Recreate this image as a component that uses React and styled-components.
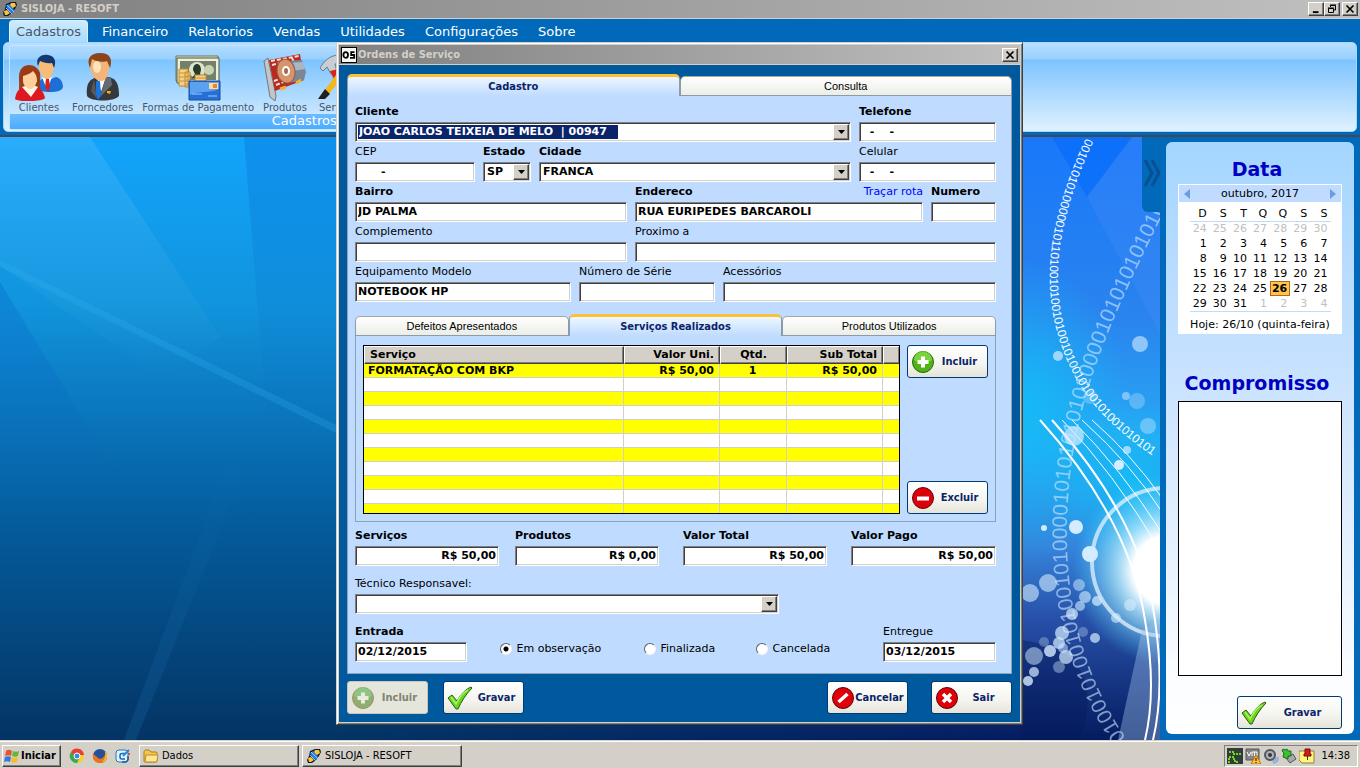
import React from "react";
import styled, { createGlobalStyle, css } from "styled-components";

const GlobalStyle = createGlobalStyle`
  * { box-sizing: border-box; }
  body {
    margin: 0;
    font-family: "DejaVu Sans", Verdana, sans-serif;
    font-size: 11px;
    color: #000;
  }
  button, input, select, textarea { font: inherit; color: inherit; margin: 0; }
`;

const compact = css`
  font-family: "DejaVu Sans Condensed", Tahoma, sans-serif;
`;

const raised = css`
  background: #d4d0c8;
  border: 1px solid;
  border-color: #fff #404040 #404040 #fff;
  box-shadow: inset -1px -1px #808080;
`;

const sunken = css`
  background-color: #fff;
  border: 1px solid;
  border-color: #808080 #fff #fff #808080;
  border-radius: 0;
  box-shadow: inset 1px 1px #404040, inset -1px -1px #d4d0c8;
`;

/* ---------- application frame ---------- */

const Page = styled.div`
  min-height: 100vh;
  display: flex;
  flex-direction: column;
  position: relative;
  background: #0069b9;
`;

const TitleBar = styled.header`
  display: flex;
  align-items: center;
  gap: 3px;
  height: 19px;
  padding: 0 2px;
  flex: none;
  background: linear-gradient(90deg, #808080, #c0c0c0);
  border-bottom: 1px solid #d4d0c8;
  color: #d4d0c8;
  font-weight: bold;
  ${compact}
`;

const TitleText = styled.h1`
  margin: 0;
  flex: 1;
  font-size: 11px;
  line-height: 16px;
`;

const CaptionButtons = styled.div`
  display: flex;
`;

const CaptionButton = styled.button`
  ${raised}
  width: 16px;
  height: 14px;
  padding: 0;
  display: flex;
  align-items: center;
  justify-content: center;
  margin-left: ${(p) => (p.$apart ? "2px" : "0")};
`;

const Ribbon = styled.div`
  flex: none;
  padding: 1px 3px 3px;
  background: #0069b9;
  border-bottom: 2px solid #444850;
`;

const Menu = styled.nav`
  display: flex;
  height: 22px;
  padding-left: 6px;
`;

const MenuTab = styled.button`
  height: 22px;
  border: 1px solid transparent;
  border-bottom: 0;
  border-radius: 4px 4px 0 0;
  padding: 0 ${(p) => (p.$active ? "6px" : "9px")};
  margin-right: ${(p) => (p.$active ? "4px" : "0")};
  background: ${(p) => (p.$active ? "linear-gradient(#cdeaff, #a9dbff)" : "none")};
  border-color: ${(p) => (p.$active ? "#d9f0ff" : "transparent")};
  color: ${(p) => (p.$active ? "#4b5563" : "#fff")};
  font-size: 13px;
  line-height: 20px;
`;

const RibbonPanel = styled.div`
  display: flex;
  height: 90px;
  padding: 2px 5px 1px;
  border: 1px solid #a4d8ff;
  border-radius: 5px;
  background: linear-gradient(#b8deff, #98d0ff 16px, #7cc4ff 17px, #a4d6ff 45px, #e0f1ff);
`;

const Group = styled.section`
  flex: none;
  width: 44%;
  display: flex;
  flex-direction: column;
  border: 1px solid #c4e6ff;
  border-radius: 3px;
`;

const Tools = styled.div`
  flex: 1;
  display: flex;
  gap: 9px;
  padding-left: 5px;
`;

const Tool = styled.button`
  display: flex;
  flex-direction: column;
  align-items: center;
  justify-content: flex-end;
  padding: 0;
  border: 0;
  background: none;
  color: #46566b;
  font-size: 10px;
  line-height: 13px;
  white-space: nowrap;
`;

const GroupName = styled.h2`
  margin: 0;
  height: 15px;
  background: linear-gradient(#6cbcff, #4cacff);
  color: #fff;
  font-size: 13px;
  font-weight: normal;
  line-height: 13px;
  text-align: center;
`;

const Desktop = styled.main`
  flex: 1;
  display: flex;
  justify-content: flex-end;
  position: relative;
`;

const Wallpaper = styled.svg`
  position: absolute;
  inset: 0;
  width: 100%;
  height: 100%;
`;

/* ---------- side bar ---------- */

const Drawer = styled.button`
  position: relative;
  width: 18px;
  height: 75px;
  padding: 0;
  border: 0;
  border-radius: 0 0 0 6px;
  background: #0069b9;
`;

const Sidebar = styled.aside`
  position: relative;
  display: flex;
  width: 200px;
  padding: 5px 6px 6px;
  background: #0069b9;
`;

const SideCard = styled.div`
  flex: 1;
  display: flex;
  flex-direction: column;
  padding: 15px 12px 5px;
  border-radius: 6px;
  background: linear-gradient(#a4d6ff, #c4e0ff 35%, #fafcff 90%, #fff);
`;

const SideTitle = styled.h2`
  margin: 0 -6px;
  padding-right: 6px;
  color: #0000c0;
  font-size: 19px;
  line-height: 24px;
  text-align: center;
`;

const Calendar = styled.section`
  margin: 3px 0 37px;
  height: 150px;
  padding: 1px;
  background: #fff;
  white-space: nowrap;
`;

const MonthBar = styled.div`
  display: flex;
  justify-content: space-between;
  align-items: center;
  height: 17px;
  padding: 0 5px;
  background: #bfdbff;
`;

const Arrow = styled.button`
  padding: 0;
  width: 6px;
  border: 0;
  background: none;
  display: flex;
`;

const Days = styled.table`
  width: 141px;
  margin: 4px auto 0;
  border-collapse: collapse;
  border-bottom: 1px solid #bfdbff;
  table-layout: fixed;
  thead { border-bottom: 1px solid #bfdbff; }
  th, td { padding: 0 3px 0 0; height: 15px; line-height: 13px; text-align: right; }
  th { font-weight: normal; }
`;

const Day = styled.td`
  color: ${(p) => (p.$out ? "#c0c0c0" : "#000")};
  ${(p) =>
    p.$today &&
    css`
      background: #ffc54c;
      outline: 1px solid #b5651d;
      outline-offset: -1px;
      font-weight: bold;
    `}
`;

const Today = styled.p`
  margin: 5px 0 0;
  line-height: 16px;
  text-align: center;
`;

const Notes = styled.textarea`
  flex: 1;
  width: 100%;
  margin: 6px 0 20px;
  border: 1px solid #000;
  border-radius: 0;
  resize: none;
  background: #fff;
`;

/* ---------- buttons ---------- */

const ActionButton = styled.button`
  display: flex;
  align-items: center;
  width: ${(p) => p.$width || 81}px;
  height: 33px;
  padding: 0 3px;
  border: 1px solid #003c74;
  border-radius: 3px;
  background: linear-gradient(#fff, #f4f4ee 60%, #e4e4da);
  color: #0a246a;
  font-weight: bold;
  align-self: ${(p) => (p.$end ? "flex-end" : "auto")};
  ${compact}
  span { flex: 1; text-align: center; white-space: nowrap; }
  svg { flex: none; }
  &:disabled {
    background: #e4e6dc;
    border-color: #c9c7ba;
    color: #80846c;
  }
`;

/* ---------- dialog ---------- */

const Dialog = styled.section`
  position: absolute;
  top: -95px;
  left: calc(50% - 344px);
  width: 687px;
  border: 1px solid;
  border-color: #d4d0c8 #404040 #404040 #d4d0c8;
  box-shadow: inset 1px 1px #fff, inset -1px -1px #808080;
  padding: 2px;
  background: #d4d0c8;
`;

const DialogTitle = styled(TitleBar)`
  height: 20px;
  gap: 1px;
`;

const DialogBody = styled.form`
  padding: 9px 8px 8px;
  background: #00599c;
`;

const TabRow = styled.div`
  display: grid;
  grid-template-columns: repeat(${(p) => p.$count}, 1fr);
  align-items: end;
`;

const Tab = styled.button`
  height: ${(p) => (p.$active ? 22 : 20)}px;
  padding: 0;
  border: 1px solid #8c9bab;
  border-top-color: #a9a9a0;
  border-radius: 5px 5px 0 0;
  background: linear-gradient(#fff, #ecede6);
  font-family: "Liberation Sans", Arial, sans-serif;
  line-height: 18px;
  ${(p) =>
    p.$active &&
    css`
      border-bottom: 0;
      border-top: 3px solid #fcc038;
      background: linear-gradient(#eef7ff, #bfdbff);
      color: #0a246a;
      font-weight: bold;
      ${compact}
    `}
`;

const TabPanel = styled.div`
  border: 1px solid #8ba3b9;
  border-top: 0;
  background: #bfdbff;
  padding: ${(p) => (p.$inner ? "9px 7px 7px" : "6px 15px 11px 7px")};
`;

const ServicesTabs = styled.div`
  margin: 12px 0 4px;
`;

const ServicesArea = styled.div`
  display: flex;
  gap: 7px;
`;

const ButtonColumn = styled.div`
  display: flex;
  flex-direction: column;
  justify-content: space-between;
`;

const FieldRow = styled.div`
  display: grid;
  grid-template-columns: ${(p) => p.$cols};
  column-gap: 8px;
`;

const Totals = styled.div`
  display: grid;
  grid-template-columns: 144px 16px 144px 24px 144px 24px 1fr;
  > :nth-child(2) { grid-column: 3; }
  > :nth-child(3) { grid-column: 5; }
  > :nth-child(4) { grid-column: 7; }
`;

const FieldBox = styled.div`
  display: flex;
  flex-direction: column;
  width: ${(p) => (p.$width ? p.$width + "px" : "auto")};
  margin-top: ${(p) => (p.$spaced ? "8px" : "0")};
`;

const LabelLine = styled.div`
  display: flex;
  justify-content: space-between;
  line-height: 20px;
  height: 20px;
  white-space: nowrap;
`;

const Label = styled.label`
  font-weight: ${(p) => (p.$bold ? "bold" : "normal")};
`;

const RouteLink = styled.a`
  color: #0000ff;
  text-decoration: none;
`;

const TextInput = styled.input`
  ${sunken}
  width: 100%;
  height: 20px;
  padding: 0 2px 1px;
  font-weight: bold;
  text-align: ${(p) => (p.$right ? "right" : "left")};
`;

const SelectBox = styled.div`
  position: relative;
  height: 20px;
`;

const Select = styled.select`
  ${sunken}
  appearance: none;
  width: 100%;
  height: 20px;
  padding: 0 18px 1px 3px;
  font-weight: bold;
  outline: 0;
  ${(p) =>
    p.$selected &&
    css`
      color: #fff;
      background-image: linear-gradient(#0a246a, #0a246a);
      background-repeat: no-repeat;
      background-position: 2px 2px;
      background-size: 260px 14px;
    `}
`;

const DropArrow = styled.span`
  ${raised}
  position: absolute;
  top: 2px;
  right: 2px;
  width: 16px;
  height: 16px;
  display: flex;
  align-items: center;
  justify-content: center;
  pointer-events: none;
`;

const GridFrame = styled.div`
  flex: 1;
  height: 169px;
  overflow: hidden;
  border: 1px solid #000;
  background: #fff;
`;

const Grid = styled.table`
  width: 100%;
  border-collapse: separate;
  border-spacing: 0;
  table-layout: fixed;
  font-weight: bold;
  th {
    ${raised}
    height: 18px;
    padding: 0 5px;
    line-height: 16px;
  }
  td {
    height: 14px;
    padding: 0 5px 0 4px;
    line-height: 13px;
    border-right: 1px solid #d4d0c8;
    border-bottom: 1px solid #d4d0c8;
  }
  tbody tr:nth-child(odd) { background: #ff0; }
  th:last-child, td:last-child { border-right: 0; }
`;

const Cell = styled.td`
  text-align: ${(p) => p.$align || "left"};
`;

const HeadCell = styled.th`
  text-align: ${(p) => p.$align || "left"};
`;

const StatusRow = styled.div`
  display: flex;
  justify-content: space-between;
  margin-top: 8px;
`;

const RadioGroup = styled.div`
  display: grid;
  grid-template-columns: 144px 112px 95px;
  align-items: center;
  padding-top: 13px;
`;

const RadioLabel = styled.label`
  display: flex;
  align-items: center;
  gap: 5px;
  white-space: nowrap;
`;

const Radio = styled.input`
  appearance: none;
  width: 12px;
  height: 12px;
  border: 1px solid;
  border-color: #606060 #f4f4f4 #f4f4f4 #606060;
  border-radius: 50%;
  background: #fff;
  &:checked { background: radial-gradient(circle, #000 2px, #fff 3px); }
`;

const Footer = styled.div`
  display: flex;
  justify-content: space-between;
  margin-top: 7px;
`;

const FooterSide = styled.div`
  display: flex;
  gap: ${(p) => p.$gap}px;
`;

/* ---------- task bar ---------- */

const Taskbar = styled.footer`
  flex: none;
  display: flex;
  align-items: center;
  height: 28px;
  padding: 2px 2px 0;
  background: #d4d0c8;
  border-top: 1px solid #d4d0c8;
  box-shadow: inset 0 1px #fff;
  ${compact}
`;

const TaskButton = styled.button`
  ${raised}
  display: flex;
  align-items: center;
  gap: ${(p) => (p.$bold ? 1 : 3)}px;
  width: ${(p) => p.$width}px;
  height: 22px;
  padding: 0 ${(p) => (p.$bold ? 1 : 3)}px;
  margin-right: 3px;
  font-weight: ${(p) => (p.$bold ? "bold" : "normal")};
  white-space: nowrap;
  svg { flex: none; }
`;

const QuickLaunch = styled.div`
  display: flex;
  gap: 7px;
  padding: 0 8px 0 5px;
`;

const Tray = styled.div`
  display: flex;
  align-items: center;
  gap: 2px;
  height: 22px;
  margin-left: auto;
  padding: 0 7px 0 2px;
  border: 1px solid;
  border-color: #808080 #fff #fff #808080;
`;

const Clock = styled.time`
  margin-left: 4px;
`;

/* ---------- icons ---------- */

const Svg = ({ s = 16, h, box = "0 0 16 16", children }) => (
  <svg width={s} height={h || s} viewBox={box} aria-hidden="true">
    {children}
  </svg>
);

const LogoIcon = () => (
  <Svg>
    <path d="M4 3 9 1h5l1 3-2 4-3 4-4 3H2L1 12l2-4z" fill="#0a1c3c" />
    <path d="M4 5l3-2 4 3 1 4-2 2-4-3z" fill="#2f7fe0" />
    <path d="M9 2h4l1 3-3 2-3-3zM2 10l3-1 3 3-3 2H3z" fill="#ffc52e" />
    <path d="m5 4 7 7M4 7l6 6" stroke="#8cc4ff" strokeWidth="1" />
  </Svg>
);

const OsIcon = () => (
  <Svg>
    <rect x=".5" y=".5" width="15" height="15" fill="#f4f7f2" stroke="#000" />
    <ellipse cx="4.700" cy="8" rx="2.300" ry="2.800" fill="none" stroke="#000" strokeWidth="1.800" />
    <path d="M13.500 5.200H10.200V8h3v2.800H9" fill="none" stroke="#000" strokeWidth="1.800" />
  </Svg>
);

const MinimizeIcon = () => (
  <Svg s={10}>
    <path d="M3 13h9" stroke="#000" strokeWidth="3" />
  </Svg>
);

const RestoreIcon = () => (
  <Svg s={10} box="0 0 10 10">
    <path d="M3.500 3V1.500h5V6H7M3 1h6M1.500 4.500h5v4h-5zM1 4h6" fill="none" stroke="#000" />
  </Svg>
);

const CloseIcon = () => (
  <Svg s={10} box="0 0 10 10">
    <path d="m1.500 1.500 7 7M8.500 1.500l-7 7" stroke="#000" strokeWidth="1.700" />
  </Svg>
);

const ClientsIcon = () => (
  <Svg s={48} box="0 0 48 48">
    <path d="M23 36c0-8 3-11 9-12l4 2 5-2c5 1 7 6 7 10-1 4-6 5-13 5-6 0-11-1-12-3z" fill="#1c6fd6" />
    <path d="m27 24 5 13 5-13-5 2z" fill="#fff" />
    <path d="m31 26 3 0 1 8-2 5-3-5z" fill="#d8201c" />
    <path d="M24 9c0-4 4-6 8-5 5 0 8 4 7 12l-3 8c-3 3-6 2-8 0l-4-8z" fill="#f6bd78" />
    <path d="M23 13c-3-8 3-12 10-11 6 1 9 5 6 13l-2-5c-5 1-9-1-12-2z" fill="#15376f" />
    <path d="M4 36c1-7-2-16 3-21 6-6 16-2 18 5 1 6-1 12 1 18-6 3-17 3-22-2z" fill="#9a3c17" />
    <path d="M0 46c1-7 4-11 9-12h11c6 1 9 6 10 11-2 4-28 4-30 1z" fill="#dd1820" />
    <path d="m7 34 9 10 7-10-7-3z" fill="#fff2e2" />
    <path d="M8 23c3-1 7-2 10-5 3 3 4 6 4 10-2 6-4 8-7 8s-7-4-7-8z" fill="#ffd19a" />
  </Svg>
);

const SupplierIcon = () => (
  <Svg s={34} h={48} box="0 0 34 48">
    <path d="M1 43c-1-11 1-16 10-19h12c8 2 10 8 10 19-5 6-28 6-32 0z" fill="#35383d" />
    <path d="m11 24 4 15 5-15-5 3z" fill="#fff" />
    <path d="m10 28 4 0 1 15-3 4-2-5z" fill="#1675e0" />
    <path d="m20 24-6 20 12-12-1-7z" fill="#666b73" />
    <path d="m8 26 3 20-6-8z" fill="#555a62" />
    <path d="M4 11C5 3 11 2 14 2c7 0 9 5 9 13-1 9-4 13-8 13-6 0-11-7-11-17z" fill="#f3b577" />
    <path d="M3 12C1 5 5 0 14 0c10 0 13 6 10 15l-3-7c-6 2-12 0-15-2l-2 9z" fill="#8c451b" />
    <path d="M21 38h4l-1 3-3-1z" fill="#ffae00" />
    <ellipse cx="11" cy="14" rx="4" ry="6" fill="#ffe3bd" />
  </Svg>
);

const MoneyIcon = () => (
  <Svg s={48} box="0 0 48 48">
    <path d="M2 3h42v25H2z" fill="#dde3c8" stroke="#6d7855" />
    <path d="M3 5h42v25H3z" fill="#edf0dc" stroke="#4c573a" />
    <path d="M6 8h36v19H6z" fill="#73806a" />
    <circle cx="23" cy="17" r="8" fill="#dfe3cb" />
    <path d="M19 17c0-8 8-8 8 0l-1 4 3 4H18l3-4z" fill="#273b2c" />
    <circle cx="35" cy="17" r="5" fill="#c9d1b3" />
    <path d="M5 16h9v17H5zM11 19h5v15h-5zM21 22h11v7H21z" fill="#f5d183" stroke="#c28a34" />
    <path d="M5 20h9M5 24h9M5 28h9M11 23h5M11 27h5M11 31h5M21 25h11" stroke="#c8923c" />
    <path d="M15 28h31v19H15z" fill="#266fd4" stroke="#184da5" />
    <path d="M16 29h29v7c-11 5-19 1-29 6z" fill="#5aa1f0" />
    <path d="M35 30h9v6h-9z" fill="#ffd9a0" />
    <path d="M39 31h4v4h-4z" fill="#e8862c" />
    <path d="M18 41h10M34 43h9" stroke="#9ccaff" strokeWidth="1" />
  </Svg>
);

const ProductsIcon = () => (
  <Svg s={44} h={48} box="0 0 44 48">
    <path d="M1 8 5 5l8 38-1 5-5-4z" fill="#c2c6c8" stroke="#777" />
    <path d="m6 7 31-6 4 26-29 11z" fill="#b92920" />
    <path d="m8 8 28-5M9 12l8-2M11 28l13-5M13 32l23-9M29 5l6 12" stroke="#f0e3d6" strokeWidth="2" strokeDasharray="4 2" />
    <path d="m22 8 17-1 4 12-2 8-16 3z" fill="#7b8797" />
    <path d="m28 10 12-1 2 7-12 2z" fill="#aab6c6" />
    <ellipse cx="23" cy="18" rx="9" ry="12" fill="#d6946c" stroke="#8f5b44" transform="rotate(-10 24 18)" />
    <ellipse cx="23" cy="18" rx="4" ry="5" fill="#fff" />
    <ellipse cx="23" cy="18" rx="2" ry="3" fill="#a26b53" />
    <path d="m33 30 5-3M17 36l6-2" stroke="#f3af2f" strokeWidth="3" />
  </Svg>
);

const ServicesIcon = () => (
  <Svg s={48} box="0 0 48 48">
    <path d="M4 15C8 8 13 3 22 2l4 7-7 2 2 8-6 2-4-7-4 4z" fill="#c8ced4" stroke="#727b84" />
    <path d="m14 18 8-2 14 28-8 3z" fill="#d8241c" />
    <path d="m2 46 24-32 5 4L9 46z" fill="#f4b619" />
    <path d="m2 46 7-10 5 5-5 5z" fill="#202020" />
  </Svg>
);

const Ball = ({ fill, dark, children }) => (
  <Svg s={24} box="0 0 24 24">
    <circle cx="12" cy="12" r="10.500" fill={fill} stroke={dark} />
    {children}
  </Svg>
);

const PlusIcon = ({ off }) => (
  <Ball fill={off ? "#8fae74" : "#4fb416"} dark={off ? "#a8905c" : "#24650c"}>
    <path d="M3 10a9 9 0 0 1 18 0c-4 3-13 3-18 0z" fill={off ? "#8cd08c" : "#8be04a"} opacity=".7" />
    <path d="M12 6.500v11M6.500 12h11" stroke={off ? "#e8ecd8" : "#fff"} strokeWidth="4" />
  </Ball>
);

const MinusIcon = () => (
  <Ball fill="#dc0008" dark="#6d0508">
    <path d="M6 12.500h12" stroke="#fff" strokeWidth="4" />
  </Ball>
);

const SlashIcon = () => (
  <Ball fill="#e00008" dark="#5d0508">
    <path d="m7.500 16 9-8" stroke="#fff" strokeWidth="3.500" />
  </Ball>
);

const CrossIcon = () => (
  <Ball fill="#e00008" dark="#5d0508">
    <path d="m8 8 8 8M16 8l-8 8" stroke="#fff" strokeWidth="3.500" />
  </Ball>
);

const CheckIcon = () => (
  <Svg s={26} box="0 0 26 26">
    <path d="m1 13 4-3 5 6C14 9 19 4 24 2l1 1C19 9 14 17 11 24H9z" fill="#68d51c" stroke="#285c17" />
    <path d="m4 12 5 7C13 11 17 7 21 5" fill="none" stroke="#a7f460" strokeWidth="1.500" />
  </Svg>
);

const WindowsIcon = () => (
  <Svg>
    <path d="M2 3c2-2 4-1 6 0L7 8C5 7 3 7 1 8z" fill="#e8542c" />
    <path d="M9 3c2 1 4 1 6 0l-1 5c-2 1-4 1-6 0z" fill="#68b43c" />
    <path d="M1 9c2-1 4-1 6 0l-1 5c-2-1-4-1-6 0z" fill="#3278dc" />
    <path d="M8 9c2 1 4 1 6 0l-1 5c-2 1-4 1-6 0z" fill="#f4c028" />
  </Svg>
);

const ChromeIcon = () => (
  <Svg>
    <circle cx="8" cy="8" r="7" fill="#fdce28" />
    <path d="M2 4a7 7 0 0 1 13 3H8L5 9z" fill="#e84132" />
    <path d="M2 4a7 7 0 0 0 6 11l3-6H6z" fill="#38a852" />
    <circle cx="8" cy="8" r="3" fill="#4285e8" stroke="#fff" />
  </Svg>
);

const FirefoxIcon = () => (
  <Svg>
    <circle cx="8" cy="8" r="7" fill="#24509c" />
    <path d="M1 5c1 3 3 2 4 4 2 3 6 2 8-2V3c4 5 2 12-5 12C3 15 0 11 1 5z" fill="#ef7318" />
    <path d="M13 3c4 5 1 11-3 11 3-2 4-6 3-11z" fill="#ffc12c" />
  </Svg>
);

const MailIcon = () => (
  <Svg>
    <rect x="1" y="2" width="12" height="12" rx="3" fill="#dff0ff" stroke="#2678b8" />
    <path d="M10 5.500H7a2 2 0 0 0-2 2V9a2 2 0 0 0 2 2h3" fill="none" stroke="#1c68a8" strokeWidth="1.500" />
    <path d="m8 8 6-6" stroke="#2f86d0" strokeWidth="2" />
    <circle cx="14" cy="6" r="1" fill="#d83020" />
    <path d="M13 8v4l-2 2H7" fill="none" stroke="#155c9d" strokeWidth="1.500" />
  </Svg>
);

const FolderIcon = () => (
  <Svg>
    <path d="M1 4c0-1 1-2 2-2h3l2 2h5c1 0 1 1 1 1v8c0 1-1 1-1 1H2c-1 0-1-1-1-1z" fill="#f4c84c" stroke="#ac7a1c" />
    <path d="m2 14 1-7h12l-1 6-1 1z" fill="#ffe692" stroke="#b98a2c" />
  </Svg>
);

const TrayIcons = () => (
  <>
    <Svg>
      <path d="M0 0h16v16H0z" fill="#353b38" />
      <path d="M2 4h5v2h7M2 15V9h5v4h3v3" fill="none" stroke="#66dc24" strokeWidth="2" strokeDasharray="2 1" />
    </Svg>
    <Svg>
      <path d="M1 1h13v11H1z" fill="#858585" stroke="#555" />
      <path d="m2 4 2 4 2-4M7 8V4h5v4M9.500 4v4" fill="none" stroke="#fff" />
      <path d="m11 7 5 9H6z" fill="#ffc834" stroke="#c86c08" />
      <path d="M11 10v3M11 14v1" stroke="#000" />
    </Svg>
    <Svg>
      <circle cx="7" cy="7" r="5" fill="#adb1b5" stroke="#51565c" strokeWidth="2" />
      <circle cx="7" cy="7" r="2" fill="#33383d" />
      <path d="M10 15c3 0 5-2 5-6M9 13c3 0 4-2 4-4" fill="none" stroke="#7ea9e0" strokeWidth="1.500" />
    </Svg>
    <Svg>
      <path d="m5 10 7-4 3 5-6 4z" fill="#a4abb1" stroke="#555" />
      <path d="M2 1l2 1 2-1 1 2h3v5H7v3L2 9l1-4-2-2z" fill="#3cc034" stroke="#1f6c1b" />
    </Svg>
    <Svg>
      <path d="M0 3h15v12H3l-3-3z" fill="#fff47c" stroke="#8a833b" />
      <path d="M6 1h5v5h1v2H5V6h1z" fill="#d91818" stroke="#790c0c" />
      <path d="M8.500 8v4" stroke="#333" />
    </Svg>
  </>
);

/* ---------- wallpaper ---------- */

const thinBits = "001010101000001011010010100101001010010100101001010101";
const wideBits = "010010100101001010000101010101010000101010101010";
const dots = [
  [1140, 344, 8, 0.6], [1058, 356, 5, 0.7], [1090, 397, 7, 0.3], [1126, 396, 4, 0.5],
  [1137, 401, 8, 0.3], [1148, 426, 8, 0.4], [1074, 436, 10, 0.7], [1119, 465, 5, 1],
  [1127, 450, 4, 0.7], [1044, 528, 3, 1], [1076, 527, 7, 1], [1090, 554, 8, 1],
  [1048, 583, 9, 0.6], [1030, 593, 9, 0.6], [1079, 585, 6, 0.5], [1085, 597, 6, 0.6],
  [1097, 601, 5, 0.7], [1080, 606, 5, 0.6], [1072, 614, 6, 0.7], [1130, 605, 6, 0.6],
  [1116, 618, 5, 0.6], [1095, 638, 5, 0.7], [1062, 633, 7, 0.7], [1059, 643, 6, 0.7],
  [1083, 632, 5, 0.3], [1044, 642, 5, 0.3], [1050, 651, 6, 0.8], [1034, 656, 9, 0.5],
  [1066, 657, 7, 0.7], [1059, 667, 6, 0.4], [1034, 672, 5, 0.7], [1028, 681, 5, 0.8],
  [1063, 648, 5, 0.5],
];

const DesktopArt = () => (
  <Wallpaper viewBox="0 137 1360 603" preserveAspectRatio="xMidYMid slice" aria-hidden="true">
    <defs>
      <linearGradient id="sea" x1="0" y1="0" x2="0" y2="1">
        <stop offset="0" stopColor="#12a4fc" />
        <stop offset=".28" stopColor="#1194dc" />
        <stop offset=".42" stopColor="#0c7cc4" />
        <stop offset=".64" stopColor="#045c9c" />
        <stop offset="1" stopColor="#043464" />
      </linearGradient>
      <linearGradient id="bay" x1="0" y1="0" x2="0" y2="1">
        <stop offset="0" stopColor="#1878fa" />
        <stop offset=".3" stopColor="#2a84ee" />
        <stop offset=".5" stopColor="#28a8f4" />
        <stop offset=".68" stopColor="#3484dc" />
        <stop offset=".8" stopColor="#2850a8" />
        <stop offset="1" stopColor="#041c60" />
      </linearGradient>
      <linearGradient id="fade" x1="0" y1="0" x2="1" y2="0">
        <stop offset="0" stopColor="#fff" stopOpacity="0" />
        <stop offset=".8" stopColor="#fff" />
      </linearGradient>
      <mask id="shore">
        <rect x="340" y="137" width="830" height="603" fill="url(#fade)" />
      </mask>
      <linearGradient id="ray" x1="0" y1="0" x2="0" y2="1">
        <stop offset="0" stopColor="#fff" stopOpacity=".1" />
        <stop offset="1" stopColor="#fff" stopOpacity="0" />
      </linearGradient>
      <linearGradient id="beam" x1="0" y1="0" x2="0" y2="1">
        <stop offset="0" stopColor="#2080c0" stopOpacity="0" />
        <stop offset="1" stopColor="#2080c0" stopOpacity=".2" />
      </linearGradient>
      <linearGradient id="shade" x1="0" y1="0" x2="0" y2="1">
        <stop offset="0" stopColor="#004cc0" stopOpacity=".22" />
        <stop offset="1" stopColor="#004cc0" stopOpacity="0" />
      </linearGradient>
      <radialGradient id="cyan">
        <stop offset="0" stopColor="#14bcf6" stopOpacity=".95" />
        <stop offset="1" stopColor="#14bcf6" stopOpacity="0" />
      </radialGradient>
      <radialGradient id="glow">
        <stop offset="0" stopColor="#fff" />
        <stop offset=".36" stopColor="#fff" />
        <stop offset=".5" stopColor="#c8f4ff" stopOpacity=".8" />
        <stop offset="1" stopColor="#38d8ff" stopOpacity="0" />
      </radialGradient>
    </defs>
    <rect y="137" width="1360" height="603" fill="url(#sea)" />
    <path d="M0 137h90l130 200-60 40L0 265z" fill="url(#ray)" />
    <path d="M0 282V480h120z" fill="url(#shade)" />
    <path d="M244 137h100v290h-77z" fill="url(#shade)" />
    <path d="m0 260 336 165v8L0 267z" fill="#36b8f4" opacity=".22" />
    <path d="m228 460-104 280h12l112-280z" fill="url(#beam)" />
    <rect x="340" y="137" width="830" height="603" fill="url(#bay)" mask="url(#shore)" />
    <ellipse cx="1020" cy="410" rx="110" ry="150" fill="url(#cyan)" />
    <ellipse cx="1130" cy="480" rx="90" ry="80" fill="url(#cyan)" />
    <path d="m1052 137 35 60 45-60z" fill="#0068fc" opacity=".5" />
    <path d="m1087 197 45-60h30v200z" fill="#5090f8" opacity=".25" />
    <path d="M1020 640q90 10 60 100h-60z" fill="#04195b" opacity=".4" />
    <circle cx="1168" cy="570" r="96" fill="url(#glow)" />
    <circle cx="1166" cy="562" r="74" fill="none" stroke="#e4f2ff" strokeWidth="4" opacity=".75" />
    <path d="m1142 630-24 110h44V620z" fill="#a0c4ec" opacity=".4" />
    <g fill="none" stroke="#fff">
      <path d="M1040 420q90 100 105 200 12 70 0 120" strokeWidth="2" />
      <path d="M1052 420q90 100 103 200 10 70-2 120" strokeWidth="2" />
      <path d="M1062 420q50 50 98 130M1072 420q50 50 88 110M1082 420q50 45 80 92M1092 420q40 35 70 78" />
    </g>
    {dots.map(([x, y, r, o]) => (
      <circle key={x + "-" + y} cx={x} cy={y} r={r} fill="#d4ecff" opacity={o} />
    ))}
    <path id="thin" d="M1086 138C1048 220 1042 280 1058 335S1105 425 1162 462" fill="none" />
    <path id="wide" d="M1126 738C1080 670 1062 590 1068 500S1100 340 1164 212" fill="none" />
    <text fill="#fff" fontFamily="Liberation Sans, Arial, sans-serif" fontSize="12">
      <textPath href="#thin">{thinBits}</textPath>
    </text>
    <text fill="#d0e8ff" opacity=".6" fontFamily="Liberation Sans, Arial, sans-serif" fontSize="21">
      <textPath href="#wide">{wideBits}</textPath>
    </text>
  </Wallpaper>
);

/* ---------- composed parts ---------- */

const Field = ({ id, label, bold, value = "", right, extra, width }) => (
  <FieldBox $width={width}>
    <LabelLine>
      <Label htmlFor={id} $bold={bold}>{label}</Label>
      {extra}
    </LabelLine>
    <TextInput id={id} defaultValue={value} $right={right} />
  </FieldBox>
);

const SelectField = ({ id, label, bold, value, selected, width, spaced }) => (
  <FieldBox $width={width} $spaced={spaced}>
    <LabelLine>
      <Label htmlFor={id} $bold={bold}>{label}</Label>
    </LabelLine>
    <SelectBox>
      <Select id={id} $selected={selected}>
        <option>{value}</option>
      </Select>
      <DropArrow>
        <Svg s={7} h={4} box="0 0 7 4">
          <path d="M0 0h7L3.500 4z" />
        </Svg>
      </DropArrow>
    </SelectBox>
  </FieldBox>
);

const Action = ({ icon, children, width, end, disabled }) => (
  <ActionButton type="button" $width={width} $end={end} disabled={disabled}>
    {icon}
    <span>{children}</span>
  </ActionButton>
);

const menus = ["Cadastros", "Financeiro", "Relatorios", "Vendas", "Utilidades", "Configurações", "Sobre"];
const tools = [
  ["Clientes", ClientsIcon],
  ["Forncedores", SupplierIcon],
  ["Formas de Pagamento", MoneyIcon],
  ["Produtos", ProductsIcon],
  ["Serviços", ServicesIcon],
];
const services = [["FORMATAÇÃO COM BKP", "R$ 50,00", "1", "R$ 50,00", ""]];
const gridRows = [...services, ...Array(10).fill(["", "", "", "", ""])];
const aligns = ["left", "right", "center", "right", "left"];
const statuses = ["Em observação", "Finalizada", "Cancelada"];
const weekdays = ["D", "S", "T", "Q", "Q", "S", "S"];
const weeks = Array.from({ length: 6 }, (_, w) =>
  Array.from({ length: 7 }, (_, d) => {
    const n = w * 7 + d - 6;
    return n < 1 ? [n + 30, true] : n > 31 ? [n - 31, true] : [n, false];
  })
);

const OrderDialog = () => (
  <Dialog aria-label="Ordens de Serviço">
    <DialogTitle>
      <OsIcon />
      <TitleText as="h2">Ordens de Serviço</TitleText>
      <CaptionButton aria-label="Fechar"><CloseIcon /></CaptionButton>
    </DialogTitle>
    <DialogBody>
      <TabRow $count={2}>
        <Tab type="button" $active>Cadastro</Tab>
        <Tab type="button">Consulta</Tab>
      </TabRow>
      <TabPanel>
        <FieldRow $cols="1fr 137px">
          <SelectField id="cliente" label="Cliente" bold selected value={"JOAO CARLOS TEIXEIA DE MELO\u00a0 | 00947"} />
          <Field id="telefone" label="Telefone" bold value="  -    -" />
        </FieldRow>
        <FieldRow $cols="120px 48px 1fr 137px">
          <Field id="cep" label="CEP" value="      -" />
          <SelectField id="estado" label="Estado" bold value="SP" />
          <SelectField id="cidade" label="Cidade" bold value="FRANCA" />
          <Field id="celular" label="Celular" value="  -    -" />
        </FieldRow>
        <FieldRow $cols="272px 1fr 65px">
          <Field id="bairro" label="Bairro" bold value="JD PALMA" />
          <Field
            id="endereco"
            label="Endereco"
            bold
            value="RUA EURIPEDES BARCAROLI"
            extra={<RouteLink href="#rota">Traçar rota</RouteLink>}
          />
          <Field id="numero" label="Numero" bold />
        </FieldRow>
        <FieldRow $cols="272px 1fr">
          <Field id="complemento" label="Complemento" />
          <Field id="proximo" label="Proximo a" />
        </FieldRow>
        <FieldRow $cols="216px 136px 1fr">
          <Field id="equipamento" label="Equipamento Modelo" value="NOTEBOOK HP" />
          <Field id="serie" label="Número de Série" />
          <Field id="acessorios" label="Acessórios" />
        </FieldRow>
        <ServicesTabs>
          <TabRow $count={3}>
            <Tab type="button">Defeitos Apresentados</Tab>
            <Tab type="button" $active>Serviços Realizados</Tab>
            <Tab type="button">Produtos Utilizados</Tab>
          </TabRow>
          <TabPanel $inner>
            <ServicesArea>
              <GridFrame>
                <Grid>
                  <colgroup>
                    <col />
                    <col width="96" />
                    <col width="67" />
                    <col width="96" />
                    <col width="16" />
                  </colgroup>
                  <thead>
                    <tr>
                      {["Serviço", "Valor Uni.", "Qtd.", "Sub Total", ""].map((h, i) => (
                        <HeadCell key={i} $align={aligns[i]}>{h}</HeadCell>
                      ))}
                    </tr>
                  </thead>
                  <tbody>
                    {gridRows.map((row, r) => (
                      <tr key={r}>
                        {row.map((c, i) => (
                          <Cell key={i} $align={aligns[i]}>{c}</Cell>
                        ))}
                      </tr>
                    ))}
                  </tbody>
                </Grid>
              </GridFrame>
              <ButtonColumn>
                <Action icon={<PlusIcon />}>Incluir</Action>
                <Action icon={<MinusIcon />}>Excluir</Action>
              </ButtonColumn>
            </ServicesArea>
          </TabPanel>
        </ServicesTabs>
        <Totals>
          <Field id="servicos" label="Serviços" bold right value="R$ 50,00" />
          <Field id="produtos" label="Produtos" bold right value="R$ 0,00" />
          <Field id="total" label="Valor Total" bold right value="R$ 50,00" />
          <Field id="pago" label="Valor Pago" bold right value="R$ 50,00" />
        </Totals>
        <SelectField id="tecnico" label="Técnico Responsavel:" value="" width={424} spaced />
        <StatusRow>
          <Field id="entrada" label="Entrada" bold value="02/12/2015" width={112} />
          <RadioGroup role="radiogroup">
            {statuses.map((s, i) => (
              <RadioLabel key={s}>
                <Radio type="radio" name="status" defaultChecked={i === 0} />
                {s}
              </RadioLabel>
            ))}
          </RadioGroup>
          <Field id="entregue" label="Entregue" value="03/12/2015" width={113} />
        </StatusRow>
      </TabPanel>
      <Footer>
        <FooterSide $gap={15}>
          <Action icon={<PlusIcon off />} disabled>Incluir</Action>
          <Action icon={<CheckIcon />}>Gravar</Action>
        </FooterSide>
        <FooterSide $gap={23}>
          <Action icon={<SlashIcon />}>Cancelar</Action>
          <Action icon={<CrossIcon />}>Sair</Action>
        </FooterSide>
      </Footer>
    </DialogBody>
  </Dialog>
);

const SidePanel = () => (
  <>
    <Drawer aria-label="Recolher painel">
      <Svg s={18} h={28} box="0 0 18 28">
        <path d="m3 1 7 13-7 13M10 1l7 13-7 13" fill="none" stroke="#0a4f90" strokeWidth="3" />
      </Svg>
    </Drawer>
    <Sidebar>
      <SideCard>
        <SideTitle>Data</SideTitle>
        <Calendar>
          <MonthBar>
            <Arrow aria-label="Mês anterior">
              <Svg s={6} h={10} box="0 0 6 10"><path d="M6 0v10L0 5z" fill="#6c9ce0" /></Svg>
            </Arrow>
            outubro, 2017
            <Arrow aria-label="Próximo mês">
              <Svg s={6} h={10} box="0 0 6 10"><path d="M0 0v10l6-5z" fill="#6c9ce0" /></Svg>
            </Arrow>
          </MonthBar>
          <Days>
            <thead>
              <tr>{weekdays.map((d, i) => <th key={i}>{d}</th>)}</tr>
            </thead>
            <tbody>
              {weeks.map((week, w) => (
                <tr key={w}>
                  {week.map(([n, out]) => (
                    <Day key={n} $out={out} $today={n === 26 && !out}>{n}</Day>
                  ))}
                </tr>
              ))}
            </tbody>
          </Days>
          <Today>Hoje: 26/10 (quinta-feira)</Today>
        </Calendar>
        <SideTitle>Compromisso</SideTitle>
        <Notes aria-label="Compromisso" />
        <Action icon={<CheckIcon />} width={105} end>Gravar</Action>
      </SideCard>
    </Sidebar>
  </>
);

export default function App() {
  return (
    <Page>
      <GlobalStyle />
      <TitleBar>
        <LogoIcon />
        <TitleText>SISLOJA - RESOFT</TitleText>
        <CaptionButtons>
          <CaptionButton aria-label="Minimizar"><MinimizeIcon /></CaptionButton>
          <CaptionButton aria-label="Restaurar"><RestoreIcon /></CaptionButton>
          <CaptionButton aria-label="Fechar" $apart><CloseIcon /></CaptionButton>
        </CaptionButtons>
      </TitleBar>
      <Ribbon>
        <Menu>
          {menus.map((m, i) => <MenuTab key={m} $active={i === 0}>{m}</MenuTab>)}
        </Menu>
        <RibbonPanel>
          <Group>
            <Tools>
              {tools.map(([name, Icon]) => (
                <Tool key={name}>
                  <Icon />
                  {name}
                </Tool>
              ))}
            </Tools>
            <GroupName>Cadastros</GroupName>
          </Group>
        </RibbonPanel>
      </Ribbon>
      <Desktop>
        <DesktopArt />
        <SidePanel />
        <OrderDialog />
      </Desktop>
      <Taskbar>
        <TaskButton $width={59} $bold><WindowsIcon />Iniciar</TaskButton>
        <QuickLaunch>
          <ChromeIcon />
          <FirefoxIcon />
          <MailIcon />
        </QuickLaunch>
        <TaskButton $width={160}><FolderIcon />Dados</TaskButton>
        <TaskButton $width={160}><LogoIcon />SISLOJA - RESOFT</TaskButton>
        <Tray>
          <TrayIcons />
          <Clock>14:38</Clock>
        </Tray>
      </Taskbar>
    </Page>
  );
}
